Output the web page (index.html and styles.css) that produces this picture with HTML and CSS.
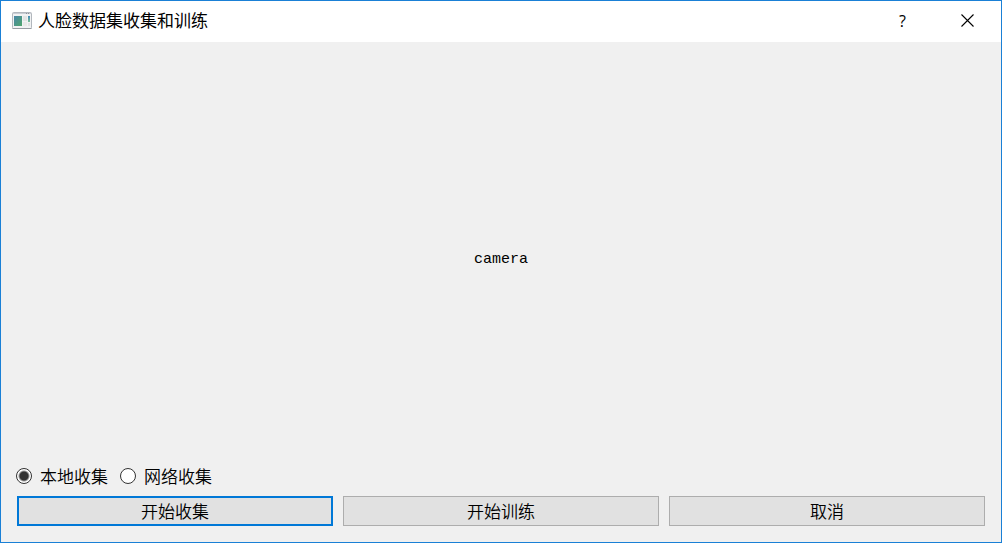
FILE: index.html
```html
<!DOCTYPE html>
<html lang="zh-CN">
<head>
<meta charset="utf-8">
<meta name="viewport" content="width=device-width, initial-scale=1">
<title>人脸数据集收集和训练</title>
<link rel="stylesheet" href="styles.css">
</head>
<body>
<main class="dialog">
  <header class="titlebar">
    <svg class="app-icon" width="20" height="18" viewBox="0 0 20 18" aria-hidden="true">
      <defs>
        <linearGradient id="screen" x1="0" y1="0" x2="1" y2="1">
          <stop offset="0" stop-color="#4a86a8"/>
          <stop offset="1" stop-color="#4fa66c"/>
        </linearGradient>
        <linearGradient id="strip" x1="0" y1="0" x2="0" y2="1">
          <stop offset="0" stop-color="#4388b8"/>
          <stop offset="1" stop-color="#7cc096"/>
        </linearGradient>
      </defs>
      <rect x="0.5" y="0.5" width="19" height="16" rx="1" fill="#f1f2f3" stroke="#b2b7bd"/>
      <path d="M1 1.5h18" stroke="#c9cdd4"/>
      <path d="M14 1.5h1M16 1.5h1" stroke="#8c929b"/>
      <path d="M0.5 16.5h19" stroke="#989da3"/>
      <rect x="2" y="4" width="8" height="10" fill="url(#screen)"/>
      <rect x="11" y="4" width="4" height="5" fill="#e1e4e3"/>
      <rect x="11" y="10" width="4" height="4" fill="#e8e9e8"/>
      <rect x="16" y="4" width="2" height="6" fill="url(#strip)"/>
      <rect x="16" y="11" width="2" height="3" fill="#e0e2e2"/>
    </svg>
    <h1 class="title">人脸数据集收集和训练</h1>
    <button class="caption-button" type="button" aria-label="帮助"><span>?</span></button>
    <button class="caption-button" type="button" aria-label="关闭">
      <svg width="13" height="13" viewBox="0 0 13 13" aria-hidden="true"><path d="M0.5 0.5l12 12M12.5 0.5l-12 12" fill="none" stroke="#000" stroke-width="1.1"/></svg>
    </button>
  </header>
  <section class="camera">camera</section>
  <form class="controls">
    <div class="options">
      <label class="option"><input class="radio" type="radio" name="source" checked>本地收集</label>
      <label class="option"><input class="radio" type="radio" name="source">网络收集</label>
    </div>
    <div class="actions">
      <button class="action action-default" type="button">开始收集</button>
      <button class="action" type="button">开始训练</button>
      <button class="action" type="button">取消</button>
    </div>
  </form>
</main>
</body>
</html>
```
FILE: styles.css
```css
* {
  box-sizing: border-box;
}

body {
  margin: 0;
  color: #000;
  font-family: "Liberation Sans", "Noto Sans CJK SC", sans-serif;
}

.dialog {
  display: flex;
  flex-direction: column;
  min-height: 100vh;
  border: 1px solid #1a80d6;
  background: #f0f0f0;
}

.titlebar {
  display: flex;
  align-items: stretch;
  height: 41px;
  padding: 0 1px 2px 11px;
  background: #fff;
}

.app-icon {
  align-self: center;
}

.title {
  flex: 1;
  margin: 0 0 0 6px;
  font-family: "Noto Sans CJK SC", sans-serif;
  font-size: 17px;
  font-weight: 400;
  line-height: 38px;
}

.caption-button {
  display: flex;
  align-items: center;
  justify-content: center;
  width: 65px;
  padding: 0;
  border: 0;
  background: transparent;
  color: #000;
  font-family: "Open Sans", sans-serif;
  font-size: 16px;
}

.camera {
  display: flex;
  flex: 1;
  align-items: center;
  justify-content: center;
  padding-top: 12px;
  font-family: "Liberation Mono", monospace;
  font-size: 15px;
}

.controls {
  padding: 0 16px 16px;
}

.options {
  display: flex;
  gap: 12px;
  margin-left: -1px;
}

.option {
  display: flex;
  align-items: center;
  gap: 8px;
  font-family: "Noto Sans CJK SC", sans-serif;
  font-size: 17px;
  font-weight: 350;
  line-height: 24px;
}

.radio {
  width: 16px;
  height: 16px;
  margin: 0;
  border: 1px solid #333;
  border-radius: 50%;
  appearance: none;
  background: #fff;
}

.radio:checked {
  background: radial-gradient(circle, #333 4px, #fff 6px);
}

.actions {
  display: grid;
  grid-template-columns: repeat(3, 1fr);
  gap: 10px;
  margin-top: 8px;
}

.action {
  height: 30px;
  padding: 0;
  border: 1px solid #adadad;
  background: #e1e1e1;
  color: #000;
  font-family: "Noto Sans CJK SC", sans-serif;
  font-size: 17px;
  font-weight: 350;
  line-height: 24px;
}

.action-default {
  border: 2px solid #0078d7;
}
```
